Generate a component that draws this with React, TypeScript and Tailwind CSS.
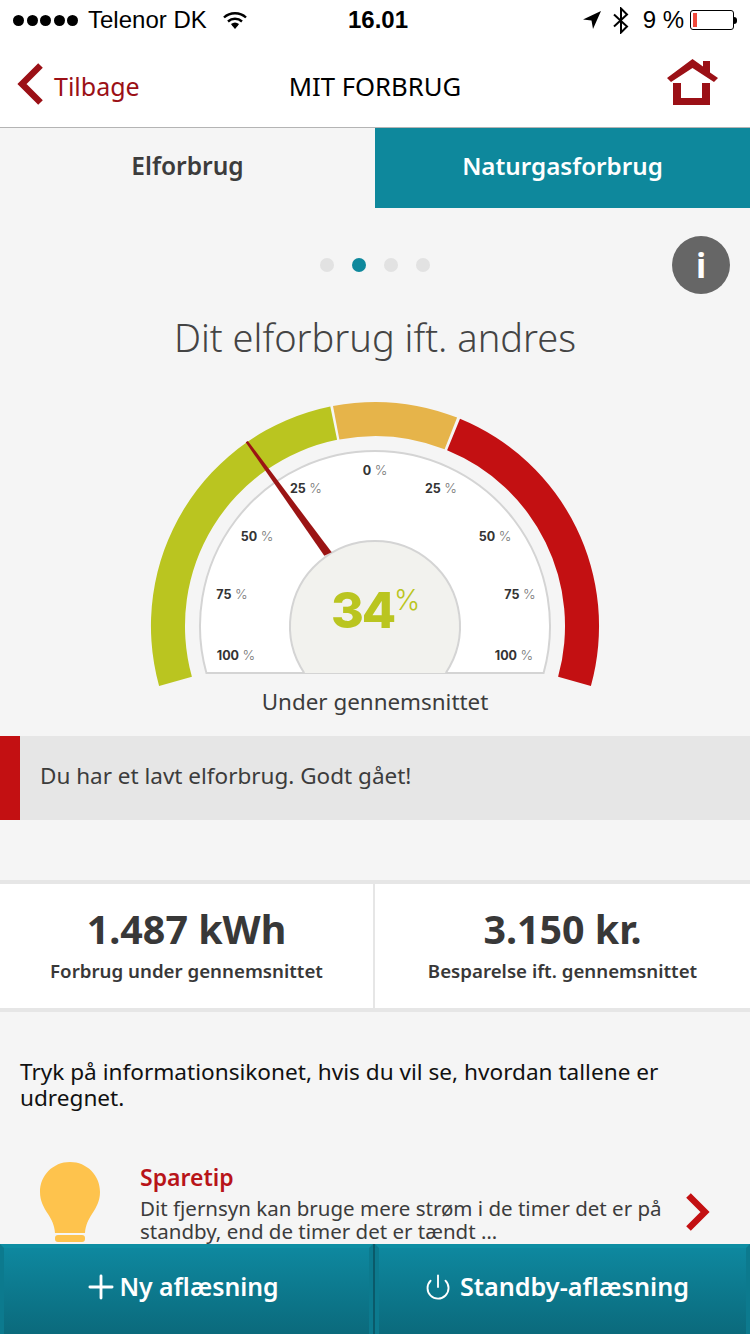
import type { ReactNode } from "react";
import { Plus, Power } from "lucide-react";

const ticks = [
  { value: "0", x: 375, y: 471 },
  { value: "25", x: 306, y: 489 },
  { value: "25", x: 441, y: 489 },
  { value: "50", x: 257, y: 537 },
  { value: "50", x: 495, y: 537 },
  { value: "75", x: 232, y: 595 },
  { value: "75", x: 520, y: 595 },
  { value: "100", x: 236, y: 656 },
  { value: "100", x: 514, y: 656 },
];

// gauge coordinates: degrees from straight up, clockwise
function polar(radius: number, degrees: number) {
  const a = (degrees * Math.PI) / 180;
  return `${(375 + radius * Math.sin(a)).toFixed(1)} ${(626 - radius * Math.cos(a)).toFixed(1)}`;
}

function arcPath(from: number, to: number) {
  return `M${polar(224, from)} A224 224 0 0 1 ${polar(224, to)} L${polar(190, to)} A190 190 0 0 0 ${polar(190, from)} Z`;
}

function StatusBar() {
  return (
    <div className="flex h-10 items-center justify-between bg-white px-[13px] font-['Liberation_Sans',sans-serif] text-[24px] text-black">
      <div className="flex w-[300px] items-center">
        <div className="flex gap-[2.5px]">
          {[0, 1, 2, 3, 4].map((dot) => (
            <span key={dot} className="h-[11px] w-[11px] rounded-full bg-black" />
          ))}
        </div>
        <span className="ml-[10px] leading-none">Telenor DK</span>
        <svg className="ml-[16px]" width="24" height="18" viewBox="0 0 24 18" fill="none" stroke="black" strokeWidth="2.4">
          <path d="M1 6.5C7 .8 17 .8 23 6.5" />
          <path d="M5 10.5c4-3.6 10-3.6 14 0" />
          <path d="M8.7 14c2-1.5 4.6-1.5 6.6 0" />
          <path d="M12 18l-3-3.5c1.8-1.2 4.2-1.2 6 0z" fill="black" stroke="none" />
        </svg>
      </div>
      <span className="ml-[6px] text-[24px] font-bold leading-none">16.01</span>
      <div className="flex w-[300px] items-center justify-end">
        <svg width="18" height="18" viewBox="0 0 18 18" fill="black">
          <path d="M18 0 0 8.5l8.5 1 1.5 8.5z" />
        </svg>
        <svg className="ml-[12px]" width="16" height="27" viewBox="0 0 16 27" fill="none" stroke="black" strokeWidth="2">
          <path d="M1 7.5 14 19.5 8 25.5V1.5l6 6L1 19.5" />
        </svg>
        <span className="ml-[14px] leading-none">9 %</span>
        <div className="ml-[6px] flex h-[20px] w-[44px] items-center rounded-[3px] border border-black p-[2px]">
          <div className="h-full w-[4px] bg-[#f04a3c]" />
        </div>
        <div className="h-[7px] w-[3px] rounded-r-full bg-black" />
      </div>
    </div>
  );
}

function NavBar() {
  return (
    <div className="relative flex h-[88px] items-center justify-between border-b border-[#b4b4b4] bg-white pl-[17px] pr-[32px]">
      <div className="flex items-center">
        <svg width="26" height="42" viewBox="0 0 26 42" fill="none" stroke="#9b1016" strokeWidth="6.5">
          <path d="M23.5 2.5 5 21l18.5 18.5" />
        </svg>
        <span className="ml-[11px] pt-[5px] text-[25px] leading-none text-[#9b1016]">Tilbage</span>
      </div>
      <span className="absolute inset-x-0 top-[34px] text-center text-[25.7px] leading-none text-black">MIT FORBRUG</span>
      <svg className="mb-[4px]" width="51" height="46" viewBox="0 0 51 46" fill="#9b1016">
        <path d="M25.5 0 36 7.5V2h7v11.5L51 19l-4 4L25.5 9 4 23l-4-4z" />
        <path d="M6 24h8v15h21V24h8v22H6z" />
      </svg>
    </div>
  );
}

function Gauge() {
  return (
    <div className="relative h-[295px] w-[750px] overflow-hidden">
      <svg className="absolute left-0 top-[-392px]" width="750" height="712" viewBox="0 0 750 712" fill="none">
        <path d={arcPath(-105.5, -11.5)} fill="#bac520" />
        <path d={arcPath(-10.8, 21.5)} fill="#e6b44a" />
        <path d={arcPath(22.3, 105.5)} fill="#c31012" />
        <path d="M206.4 673 A175 175 0 1 1 543.6 673 Z" fill="white" stroke="#d4d4d4" strokeWidth="2" />
        <path d="M304.2 673 A85 85 0 1 1 445.8 673" fill="#f2f2ee" stroke="#d4d4d4" strokeWidth="2" />
        <path d="M245.7 442.3 247.9 441 331.7 552.3 324.3 555.7Z" fill="#9b1414" />
      </svg>
      {ticks.map((tick) => (
        <span
          key={`${tick.x}-${tick.y}`}
          className="absolute -translate-x-1/2 -translate-y-1/2 whitespace-nowrap font-['Inter',sans-serif] text-[12.5px] leading-none"
          style={{ left: tick.x, top: tick.y - 392 }}
        >
          <b className="font-bold text-[#333333]">{tick.value}</b>{" "}
          <span className="text-[13.5px] font-light text-[#777777]">%</span>
        </span>
      ))}
      <span className="absolute left-[331px] top-[193px] font-['Inter',sans-serif] text-[50px] font-extrabold leading-none tracking-[-2px] text-[#bac520]">
        34
      </span>
      <span className="absolute left-[394px] top-[194px] font-['Inter',sans-serif] text-[28px] font-light leading-none text-[#bac520]">
        %
      </span>
    </div>
  );
}

function Stat({ value, label, className }: { value: string; label: string; className: string }) {
  return (
    <div className={`flex flex-col items-center pt-[20px] ${className}`}>
      <span className="text-[39.4px] font-bold leading-[50px] text-[#383838]">{value}</span>
      <span className="mt-[4px] text-[18.7px] font-semibold leading-[26px] text-[#383838]">{label}</span>
    </div>
  );
}

function ActionButton({ children, className }: { children: ReactNode; className: string }) {
  return (
    <div
      className={`flex items-center justify-center border-x-[4px] border-t-[4px] border-x-[#0c7a8e] border-t-[#0e8ea3] bg-gradient-to-b from-[#0e889f] to-[#0b6a7c] pb-[8px] pr-[12px] font-semibold text-white ${className}`}
    >
      {children}
    </div>
  );
}

export default function App() {
  return (
    <div className="flex h-[1334px] w-[750px] flex-col overflow-hidden bg-[#f5f5f5] font-['Noto_Sans',sans-serif]">
      <StatusBar />
      <NavBar />
      <main className="flex-1 overflow-hidden">
        <div className="flex h-[80px]">
          <div className="flex flex-1 items-center justify-center pb-[4px] text-[24.5px] font-semibold text-[#3c3c3c]">Elforbrug</div>
          <div className="flex flex-1 items-center justify-center bg-[#0e889c] pb-[4px] text-[24.2px] font-semibold text-white">
            Naturgasforbrug
          </div>
        </div>

        <div className="relative flex h-[114px] items-center justify-center gap-[18px]">
          <span className="h-[14px] w-[14px] rounded-full bg-[#e2e2e2]" />
          <span className="h-[14px] w-[14px] rounded-full bg-[#0e889c]" />
          <span className="h-[14px] w-[14px] rounded-full bg-[#e2e2e2]" />
          <span className="h-[14px] w-[14px] rounded-full bg-[#e2e2e2]" />
          <span className="absolute left-[672px] top-[28px] flex h-[58px] w-[58px] items-center justify-center rounded-full bg-[#666666] text-[34px] font-bold leading-none text-white">
            i
          </span>
        </div>

        <h1 className="h-[70px] text-center text-[38px] font-light leading-[30px] text-[#444444]">Dit elforbrug ift. andres</h1>

        <Gauge />

        <p className="text-center text-[22.4px] leading-[30px] text-[#3c3c3c]">Under gennemsnittet</p>

        <div className="mt-[19px] flex h-[84px] bg-[#e6e6e6]">
          <div className="w-[20px] bg-[#c31012]" />
          <p className="pl-[20px] pt-[24px] text-[22.5px] leading-[32px] text-[#3c3c3c]">Du har et lavt elforbrug. Godt gået!</p>
        </div>

        <div className="mt-[60px] flex h-[132px] border-y-[4px] border-[#e6e6e6] bg-white">
          <Stat value="1.487 kWh" label="Forbrug under gennemsnittet" className="w-[373px]" />
          <div className="w-[2px] bg-[#e6e6e6]" />
          <Stat value="3.150 kr." label="Besparelse ift. gennemsnittet" className="flex-1" />
        </div>

        <p className="px-5 pt-[47px] text-[22.6px] leading-[26px] text-[#111111]">
          Tryk på informationsikonet, hvis du vil se, hvordan tallene er udregnet.
        </p>

        <div className="mt-[51px] flex">
          <svg className="ml-[40px] shrink-0" width="60" height="80" viewBox="0 0 60 80" fill="#fec34d">
            <path d="M30 0C13 0 0 13.5 0 30c0 9 3.5 15 8 22 3.5 5.500 6.5 11 7 19h30c.5-8 3.5-13.500 7-19 4.500-7 8-13 8-22C60 13.5 47 0 30 0z" />
            <rect x="15" y="73" width="30" height="7" rx="3" />
          </svg>
          <div className="ml-[40px] w-[540px]">
            <p className="text-[23px] font-semibold leading-[30px] text-[#b81419]">Sparetip</p>
            <p className="mt-[5px] text-[20.5px] leading-[23px] text-[#3c3c3c]">
              Dit fjernsyn kan bruge mere strøm i de timer det er på standby, end de timer det er tændt …
            </p>
          </div>
          <svg className="ml-[6px] mt-[31px] shrink-0" width="24" height="38" viewBox="0 0 24 38" fill="none" stroke="#c31012" strokeWidth="6.5">
            <path d="M2.5 2.5 19 19 2.5 35.5" />
          </svg>
        </div>
      </main>

      <footer className="flex h-[90px] shrink-0">
        <ActionButton className="w-[373px] text-[24.8px]">
          <Plus size={38} strokeWidth={1.8} className="-mr-[1px]" />
          Ny aflæsning
        </ActionButton>
        <div className="w-[2px] bg-[#0a5a6a]" />
        <ActionButton className="flex-1 text-[25.2px]">
          <Power size={28} strokeWidth={1.6} className="mr-[8px]" />
          Standby-aflæsning
        </ActionButton>
      </footer>
    </div>
  );
}
